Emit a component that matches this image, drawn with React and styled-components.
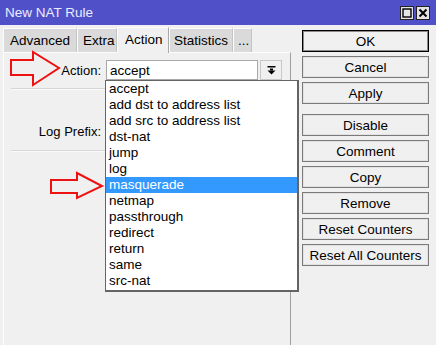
import React from 'react'
import styled, { createGlobalStyle } from 'styled-components'

const GlobalStyle = createGlobalStyle`
  html, body {
    margin: 0;
    padding: 0;
    background: #f0f0f0;
  }
  body {
    font-family: 'Liberation Sans', Arial, sans-serif;
    font-size: 13px;
    color: #000;
  }
`

const Window = styled.div`
  position: relative;
  width: 436px;
  height: 345px;
  display: flex;
  flex-direction: column;
  background: #f0f0f0;
  overflow: hidden;
`

const TitleBar = styled.div`
  height: 25px;
  flex-shrink: 0;
  background: #5050c8;
  display: flex;
  align-items: center;
  justify-content: space-between;
  padding: 0 6px 0 5px;
`

const Title = styled.div`
  color: #ececff;
  font-size: 13.5px;
`

const TitleButtons = styled.div`
  display: flex;
  gap: 2px;
`

const TitleBtn = styled.div`
  width: 12px;
  height: 12px;
  background: #e4e4e4;
  border: 1px solid #222;
  display: flex;
  align-items: center;
  justify-content: center;
`

const Body = styled.div`
  flex: 1;
  display: flex;
`

const LeftPane = styled.div`
  width: 288px;
  padding-left: 3px;
  display: flex;
  flex-direction: column;
`

const TabStrip = styled.div`
  height: 27px;
  display: flex;
  align-items: flex-end;
`

const Tab = styled.div`
  width: ${p => p.w}px;
  height: ${p => (p.active ? 26 : 24)}px;
  box-sizing: border-box;
  background: ${p => (p.active ? '#f0f0f0' : '#dadada')};
  border-left: 1px solid #fdfdfd;
  border-top: 1px solid #fdfdfd;
  border-right: 1px solid ${p => (p.active ? '#a8a8a8' : '#c4c4c4')};
  display: flex;
  align-items: center;
  padding-left: ${p => p.pad}px;
  padding-bottom: ${p => (p.active ? 3 : 0)}px;
  margin-bottom: ${p => (p.active ? -1 : 0)}px;
  font-size: 13.5px;
  white-space: nowrap;
  overflow: hidden;
  position: relative;
  z-index: ${p => (p.active ? 1 : 0)};
`

const Panel = styled.div`
  flex: 1;
  border-top: 1px solid #fdfdfd;
  border-left: 1px solid #fdfdfd;
  border-right: 1px solid #a0a0a0;
  display: flex;
  flex-direction: column;
  padding-top: 7px;
`

const FieldRow = styled.div`
  height: 20px;
  display: flex;
  align-items: center;
  margin-top: ${p => p.mt || 0}px;
`

const Label = styled.div`
  width: 97px;
  text-align: right;
  margin-right: 5px;
`

const Input = styled.div`
  width: ${p => p.w}px;
  height: 20px;
  box-sizing: border-box;
  background: #fff;
  border: 1px solid #a8a8a8;
  display: flex;
  align-items: center;
  padding-left: 3px;
  font-size: 13.5px;
`

const DropBtn = styled.div`
  width: 22px;
  height: 20px;
  box-sizing: border-box;
  margin-left: 2px;
  border: 1px solid #c8c8c8;
  background: #f0f0f0;
  display: flex;
  align-items: center;
  justify-content: center;
`

const Separator = styled.div`
  height: 1px;
  background: #d6d6d6;
  border-bottom: 1px solid #fbfbfb;
  margin: ${p => p.mt}px 6px 0 7px;
`

const RightPane = styled.div`
  flex: 1;
  display: flex;
  flex-direction: column;
  padding: 5px 0 0 11px;
`

const Button = styled.div`
  width: 127px;
  height: 22px;
  box-sizing: border-box;
  margin-top: ${p => p.mt}px;
  background: #f0f0f0;
  border: 1px solid ${p => (p.primary ? '#000' : '#7a7a7a')};
  box-shadow: inset 0 0 0 1px ${p => (p.primary ? '#8a8a8a' : '#e2e2e2')};
  display: flex;
  align-items: center;
  justify-content: center;
  font-size: 13.5px;
`

const DropList = styled.div`
  position: absolute;
  left: 105px;
  top: 80px;
  width: 194px;
  box-sizing: border-box;
  background: #fff;
  border: 1px solid #646464;
  border-right-width: 2px;
  border-bottom-width: 2px;
  padding-bottom: 1px;
`

const Item = styled.div`
  height: 16px;
  line-height: 16px;
  padding-left: 3px;
  font-size: 13.5px;
  background: ${p => (p.selected ? '#3399ff' : 'transparent')};
  color: ${p => (p.selected ? '#fff' : '#000')};
`

const Arrow = styled.svg`
  position: absolute;
  left: 0;
  top: 0;
  pointer-events: none;
`

const tabs = [
  { name: 'Advanced', w: 74, pad: 6 },
  { name: 'Extra', w: 40, pad: 5 },
  { name: 'Action', w: 52, pad: 7, active: true },
  { name: 'Statistics', w: 64, pad: 4 },
  { name: '...', w: 19, pad: 4 },
]

const actions = [
  'accept',
  'add dst to address list',
  'add src to address list',
  'dst-nat',
  'jump',
  'log',
  'masquerade',
  'netmap',
  'passthrough',
  'redirect',
  'return',
  'same',
  'src-nat',
]

const buttons = [
  { name: 'OK', mt: 0, primary: true },
  { name: 'Cancel', mt: 4 },
  { name: 'Apply', mt: 4 },
  { name: 'Disable', mt: 10 },
  { name: 'Comment', mt: 4 },
  { name: 'Copy', mt: 4 },
  { name: 'Remove', mt: 4 },
  { name: 'Reset Counters', mt: 4 },
  { name: 'Reset All Counters', mt: 4 },
]

export default function App() {
  return (
    <>
      <GlobalStyle />
      <Window>
        <TitleBar>
          <Title>New NAT Rule</Title>
          <TitleButtons>
            <TitleBtn>
              <svg width="10" height="10" viewBox="0 0 10 10">
                <rect x="1" y="1" width="8" height="8" fill="none" stroke="#000" strokeWidth="1.4" />
              </svg>
            </TitleBtn>
            <TitleBtn>
              <svg width="10" height="10" viewBox="0 0 10 10">
                <path d="M1.5 1.5 L8.5 8.5 M8.5 1.5 L1.5 8.5" stroke="#000" strokeWidth="2" />
              </svg>
            </TitleBtn>
          </TitleButtons>
        </TitleBar>

        <Body>
          <LeftPane>
            <TabStrip>
              {tabs.map(t => (
                <Tab key={t.name} w={t.w} pad={t.pad} active={t.active}>
                  {t.name}
                </Tab>
              ))}
            </TabStrip>
            <Panel>
              <FieldRow>
                <Label>Action:</Label>
                <Input w={152}>accept</Input>
                <DropBtn>
                  <svg width="9" height="9" viewBox="0 0 9 9">
                    <rect x="0.5" y="0" width="8" height="1.5" fill="#000" />
                    <rect x="3" y="2.5" width="3" height="2" fill="#000" />
                    <path d="M0.5 4.5 L8.5 4.5 L4.5 8.5 Z" fill="#000" />
                  </svg>
                </DropBtn>
              </FieldRow>
              <Separator mt={8} />
              <FieldRow mt={31}>
                <Label>Log Prefix:</Label>
                <Input w={176} />
              </FieldRow>
              <Separator mt={9} />
            </Panel>
          </LeftPane>

          <RightPane>
            {buttons.map(b => (
              <Button key={b.name} mt={b.mt} primary={b.primary}>
                {b.name}
              </Button>
            ))}
          </RightPane>
        </Body>

        <DropList>
          {actions.map(a => (
            <Item key={a} selected={a === 'masquerade'}>
              {a}
            </Item>
          ))}
        </DropList>

        <Arrow width="436" height="345">
          <polygon
            points="11,60 33,60 33,52 59,68 33,85 33,75 11,75"
            fill="none"
            stroke="#ee1111"
            strokeWidth="2"
            strokeLinejoin="miter"
          />
          <polygon
            points="51,180 77,180 77,173 102,186 77,198 77,193 51,193"
            fill="none"
            stroke="#ee1111"
            strokeWidth="2"
            strokeLinejoin="miter"
          />
        </Arrow>
      </Window>
    </>
  )
}
